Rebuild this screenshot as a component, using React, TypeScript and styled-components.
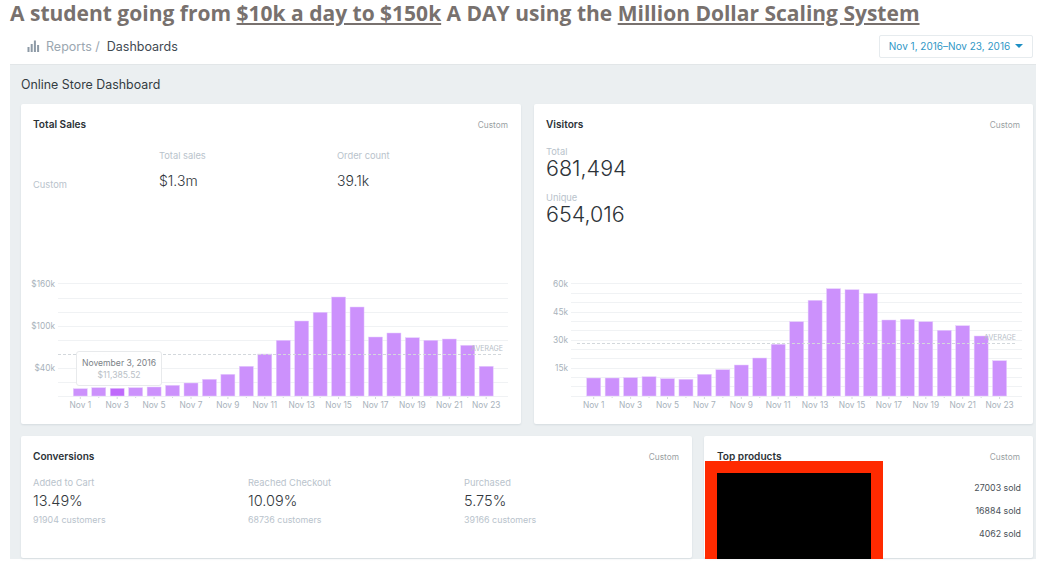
import React from 'react'
import styled, { createGlobalStyle } from 'styled-components'

const GlobalStyle = createGlobalStyle`
  html, body {
    margin: 0;
    padding: 0;
    height: 563px;
    overflow: hidden;
    background: #fff;
    font-family: Inter, "Liberation Sans", sans-serif;
  }
`

const Page = styled.div`
  width: 1042px;
  height: 563px;
  padding: 0 6px 0 10px;
  box-sizing: border-box;
`

const Headline = styled.h1`
  margin: 0;
  height: 26px;
  font: 700 21px/26px "Open Sans", sans-serif;
  color: #78716e;
  white-space: nowrap;

  u {
    text-decoration-thickness: 2px;
    text-underline-offset: 2px;
  }
`

const TopBar = styled.div`
  height: 38px;
  padding: 0 3px 0 17px;
  display: flex;
  align-items: center;
  justify-content: space-between;
`

const Crumbs = styled.div`
  display: flex;
  align-items: center;
  font-size: 12.5px;
  margin-top: 2px;
`

const CrumbIcon = styled.svg`
  width: 13px;
  height: 12px;
  margin-right: 6px;
  color: #8d9aa6;
`

const CrumbLink = styled.span`
  color: #9ba7b1;
  margin-right: 7px;
`

const CrumbCurrent = styled.span`
  color: #3f4a52;
`

const DateButton = styled.div`
  width: 154px;
  height: 23px;
  margin-top: 2px;
  box-sizing: border-box;
  border: 1px solid #e6ebee;
  border-radius: 2px;
  display: flex;
  align-items: center;
  justify-content: center;
  gap: 5px;
  font-size: 10px;
  color: #2f97c6;

  &::after {
    content: '';
    border-left: 4px solid transparent;
    border-right: 4px solid transparent;
    border-top: 4px solid #1d8fc4;
  }
`

const Panel = styled.main`
  height: 495px;
  box-sizing: border-box;
  background: #ebeff1;
  border-top: 1px solid #e2e6e8;
  padding: 0 3px 0 11px;
  display: flex;
  flex-direction: column;
  gap: 12px;
`

const PanelTitle = styled.div`
  height: 27px;
  display: flex;
  align-items: flex-end;
  font-size: 12.4px;
  line-height: 15px;
  color: #333c42;
`

const Row = styled.div<{ $gap: number }>`
  display: flex;
  gap: ${p => p.$gap}px;
`

const Card = styled.section<{ $width: number; $height: number }>`
  position: relative;
  width: ${p => p.$width}px;
  height: ${p => p.$height}px;
  box-sizing: border-box;
  background: #fff;
  border-radius: 2px;
  box-shadow: 0 1px 2px rgba(60, 80, 95, 0.12);
  display: flex;
  flex-direction: column;
`

const CardHead = styled.div`
  height: 40px;
  padding: 0 13px 0 12px;
  display: flex;
  align-items: center;
  justify-content: space-between;
`

const TopProductsHead = styled(CardHead)`
  padding-left: 13px;
`

const CardTitle = styled.h2`
  margin: 0;
  font-size: 10.1px;
  font-weight: 600;
  color: #2b3136;
`

const CardNote = styled.span`
  font-size: 8.3px;
  margin-top: 1px;
  color: #9a9fa3;
`

const Muted = styled.div`
  font-size: 9.3px;
  line-height: 11px;
  color: #b9c3cc;
`

const CustomerCount = styled(Muted)`
  font-size: 8.9px;
`

const SalesStats = styled.div`
  padding: 6px 12px 0;
  display: grid;
  grid-template-columns: 126px 178px 1fr;
  grid-template-rows: 11px 29px;
  align-items: end;
`

const SmallValue = styled.div`
  font-size: 14px;
  line-height: 16px;
  font-weight: 300;
  margin-bottom: 1px;
  color: #2f363b;
`

const VisitorStats = styled.div`
  padding: 2px 12px 0;
  display: flex;
  flex-direction: column;
`

const BigValue = styled.div`
  font-size: 21.5px;
  line-height: 26px;
  font-weight: 300;
  color: #2d3338;
  margin: -2px 0 11px;
`

const ChartBox = styled.div`
  position: relative;
  margin-top: auto;
  height: 146px;
`

const ChartSvg = styled.svg`
  display: block;
  font-family: Inter, "Liberation Sans", sans-serif;
`

const Tooltip = styled.div`
  position: absolute;
  left: 55px;
  top: 73px;
  width: 86px;
  height: 35px;
  box-sizing: border-box;
  background: rgba(255, 255, 255, 0.96);
  border: 1px solid #e8eaec;
  border-radius: 3px;
  text-align: center;
  font-size: 8.6px;
  line-height: 12px;
  padding-top: 5px;
  color: #7b8287;

  span {
    display: block;
    color: #b9c0c6;
  }
`

const Metrics = styled.div`
  padding: 1px 12px 0;
  display: grid;
  grid-template-columns: 215px 216px 1fr;
`

const Metric = styled.div`
  display: flex;
  flex-direction: column;
`

const MetricValue = styled.div`
  font-size: 14.5px;
  line-height: 20px;
  margin: 3px 0 3px;
  font-weight: 300;
  color: #33393e;
`

const SoldList = styled.div`
  padding: 6px 12px 0 0;
  display: flex;
  flex-direction: column;
  align-items: flex-end;
  gap: 11px;
`

const Sold = styled.div`
  font-size: 8.8px;
  line-height: 12px;
  color: #4a5157;
`

const RedactBox = styled.div`
  position: absolute;
  left: 1px;
  top: 25px;
  width: 178px;
  height: 98px;
  box-sizing: border-box;
  background: #000;
  border: solid #ff2a00;
  border-width: 12px 12px 0;
`

type ChartProps = {
  width: number
  tops: number[]
  firstBar: number
  gridLeft: number
  gridRight: number
  gridLines: number[]
  labels: { text: string; y: number }[]
  labelRight: number
  avgY: number
  avgLeft: number
  avgRight: number
  highlight?: number
}

// y values are page pixels, the svg starts 278px down the page
const ORIGIN_Y = 278
const BASE = 396
const PITCH = 18.45
const BAR = 14

function BarChart(props: ChartProps) {
  const { width, tops, firstBar, gridLeft, gridRight, gridLines, labels, labelRight, avgY, avgLeft, avgRight, highlight } = props

  return (
    <ChartSvg width={width} height={146} viewBox={`0 ${ORIGIN_Y} ${width} 146`}>
      {gridLines.map(y => (
        <line key={y} x1={gridLeft} x2={gridRight} y1={y + 0.5} y2={y + 0.5} stroke="#f0f2f4" />
      ))}
      {labels.map(l => (
        <text key={l.text} x={labelRight} y={l.y + 3} textAnchor="end" fontSize="8.3" fill="#a8b2bb">
          {l.text}
        </text>
      ))}
      {tops.map((top, i) => {
        const x = firstBar + i * PITCH
        return (
          <g key={i}>
            <rect x={x} y={top} width={BAR} height={BASE - top} fill={i === highlight ? '#bf69fb' : '#cc91fc'} stroke="#e6cdfd" strokeWidth="0.5" />
            <line x1={x + BAR / 2} x2={x + BAR / 2} y1={BASE + 1} y2={BASE + (i % 2 ? 2 : 3)} stroke="#d3d9de" />
            {i % 2 === 0 && (
              <text x={x + BAR / 2} y={BASE + 12} textAnchor="middle" fontSize="8.3" fill="#a8b2bb">
                Nov {i + 1}
              </text>
            )}
          </g>
        )
      })}
      <line x1={avgLeft} x2={avgRight} y1={avgY + 0.5} y2={avgY + 0.5} stroke="#d3d8dc" strokeDasharray="3 2" />
      <text x={avgRight} y={avgY - 3} textAnchor="end" fontSize="7" fill="#b7c0c8">
        AVERAGE
      </text>
    </ChartSvg>
  )
}

const salesTops = [388.7, 387.7, 388.3, 387.7, 387, 385.3, 383, 379.3, 374.3, 366.3, 354, 340.3, 321, 312.3, 297, 307, 337, 333, 337.7, 340.3, 339, 345.3, 366.3]
const visitorTops = [378, 378, 377.7, 376.7, 378.7, 379.3, 374.3, 369.7, 365, 358, 344.3, 321.7, 300.3, 288.7, 289.7, 293.3, 320, 319.3, 321.7, 330.3, 325.7, 336, 360.7]

const salesGrid = [283, 298, 312, 326, 340, 368, 382, 396]
const visitorGrid = [283, 293, 302, 312, 321, 330, 340, 349, 358, 368, 377, 386, 396]

const metrics = [
  { label: 'Added to Cart', value: '13.49%', customers: '91904 customers' },
  { label: 'Reached Checkout', value: '10.09%', customers: '68736 customers' },
  { label: 'Purchased', value: '5.75%', customers: '39166 customers' },
]

export default function App() {
  return (
    <Page>
      <GlobalStyle />
      <Headline>
        A student going from <u>$10k a day to $150k</u> A DAY using the <u>Million Dollar Scaling System</u>
      </Headline>
      <TopBar>
        <Crumbs>
          <CrumbIcon viewBox="0 0 13 12" fill="currentColor">
            <rect x="0.5" y="7" width="2" height="5" />
            <rect x="3.7" y="4" width="2" height="8" />
            <rect x="6.9" y="0.5" width="2" height="11.5" />
            <rect x="10.1" y="5" width="2" height="7" />
          </CrumbIcon>
          <CrumbLink>Reports /</CrumbLink>
          <CrumbCurrent>Dashboards</CrumbCurrent>
        </Crumbs>
        <DateButton>Nov 1, 2016–Nov 23, 2016</DateButton>
      </TopBar>
      <Panel>
        <PanelTitle>Online Store Dashboard</PanelTitle>
        <Row $gap={13}>
          <Card $width={500} $height={320}>
            <CardHead>
              <CardTitle>Total Sales</CardTitle>
              <CardNote>Custom</CardNote>
            </CardHead>
            <SalesStats>
              <span />
              <Muted>Total sales</Muted>
              <Muted>Order count</Muted>
              <Muted>Custom</Muted>
              <SmallValue>$1.3m</SmallValue>
              <SmallValue>39.1k</SmallValue>
            </SalesStats>
            <ChartBox>
              <BarChart
                width={500}
                tops={salesTops}
                firstBar={52.3}
                gridLeft={37}
                gridRight={487}
                gridLines={salesGrid}
                labels={[
                  { text: '$160k', y: 284 },
                  { text: '$100k', y: 326 },
                  { text: '$40k', y: 368 },
                ]}
                labelRight={34}
                avgY={354}
                avgLeft={37}
                avgRight={482}
                highlight={2}
              />
              <Tooltip>
                November 3, 2016
                <span>$11,385.52</span>
              </Tooltip>
            </ChartBox>
          </Card>
          <Card $width={499} $height={320}>
            <CardHead>
              <CardTitle>Visitors</CardTitle>
              <CardNote>Custom</CardNote>
            </CardHead>
            <VisitorStats>
              <Muted>Total</Muted>
              <BigValue>681,494</BigValue>
              <Muted>Unique</Muted>
              <BigValue>654,016</BigValue>
            </VisitorStats>
            <ChartBox>
              <BarChart
                width={499}
                tops={visitorTops}
                firstBar={52.7}
                gridLeft={37}
                gridRight={488}
                gridLines={visitorGrid}
                labels={[
                  { text: '60k', y: 284 },
                  { text: '45k', y: 312 },
                  { text: '30k', y: 340 },
                  { text: '15k', y: 368 },
                ]}
                labelRight={34}
                avgY={343}
                avgLeft={43}
                avgRight={482}
              />
            </ChartBox>
          </Card>
        </Row>
        <Row $gap={12}>
          <Card $width={671} $height={122}>
            <CardHead>
              <CardTitle>Conversions</CardTitle>
              <CardNote>Custom</CardNote>
            </CardHead>
            <Metrics>
              {metrics.map(m => (
                <Metric key={m.label}>
                  <Muted>{m.label}</Muted>
                  <MetricValue>{m.value}</MetricValue>
                  <CustomerCount>{m.customers}</CustomerCount>
                </Metric>
              ))}
            </Metrics>
          </Card>
          <Card $width={329} $height={122}>
            <TopProductsHead>
              <CardTitle>Top products</CardTitle>
              <CardNote>Custom</CardNote>
            </TopProductsHead>
            <SoldList>
              <Sold>27003 sold</Sold>
              <Sold>16884 sold</Sold>
              <Sold>4062 sold</Sold>
            </SoldList>
            <RedactBox />
          </Card>
        </Row>
      </Panel>
    </Page>
  )
}
